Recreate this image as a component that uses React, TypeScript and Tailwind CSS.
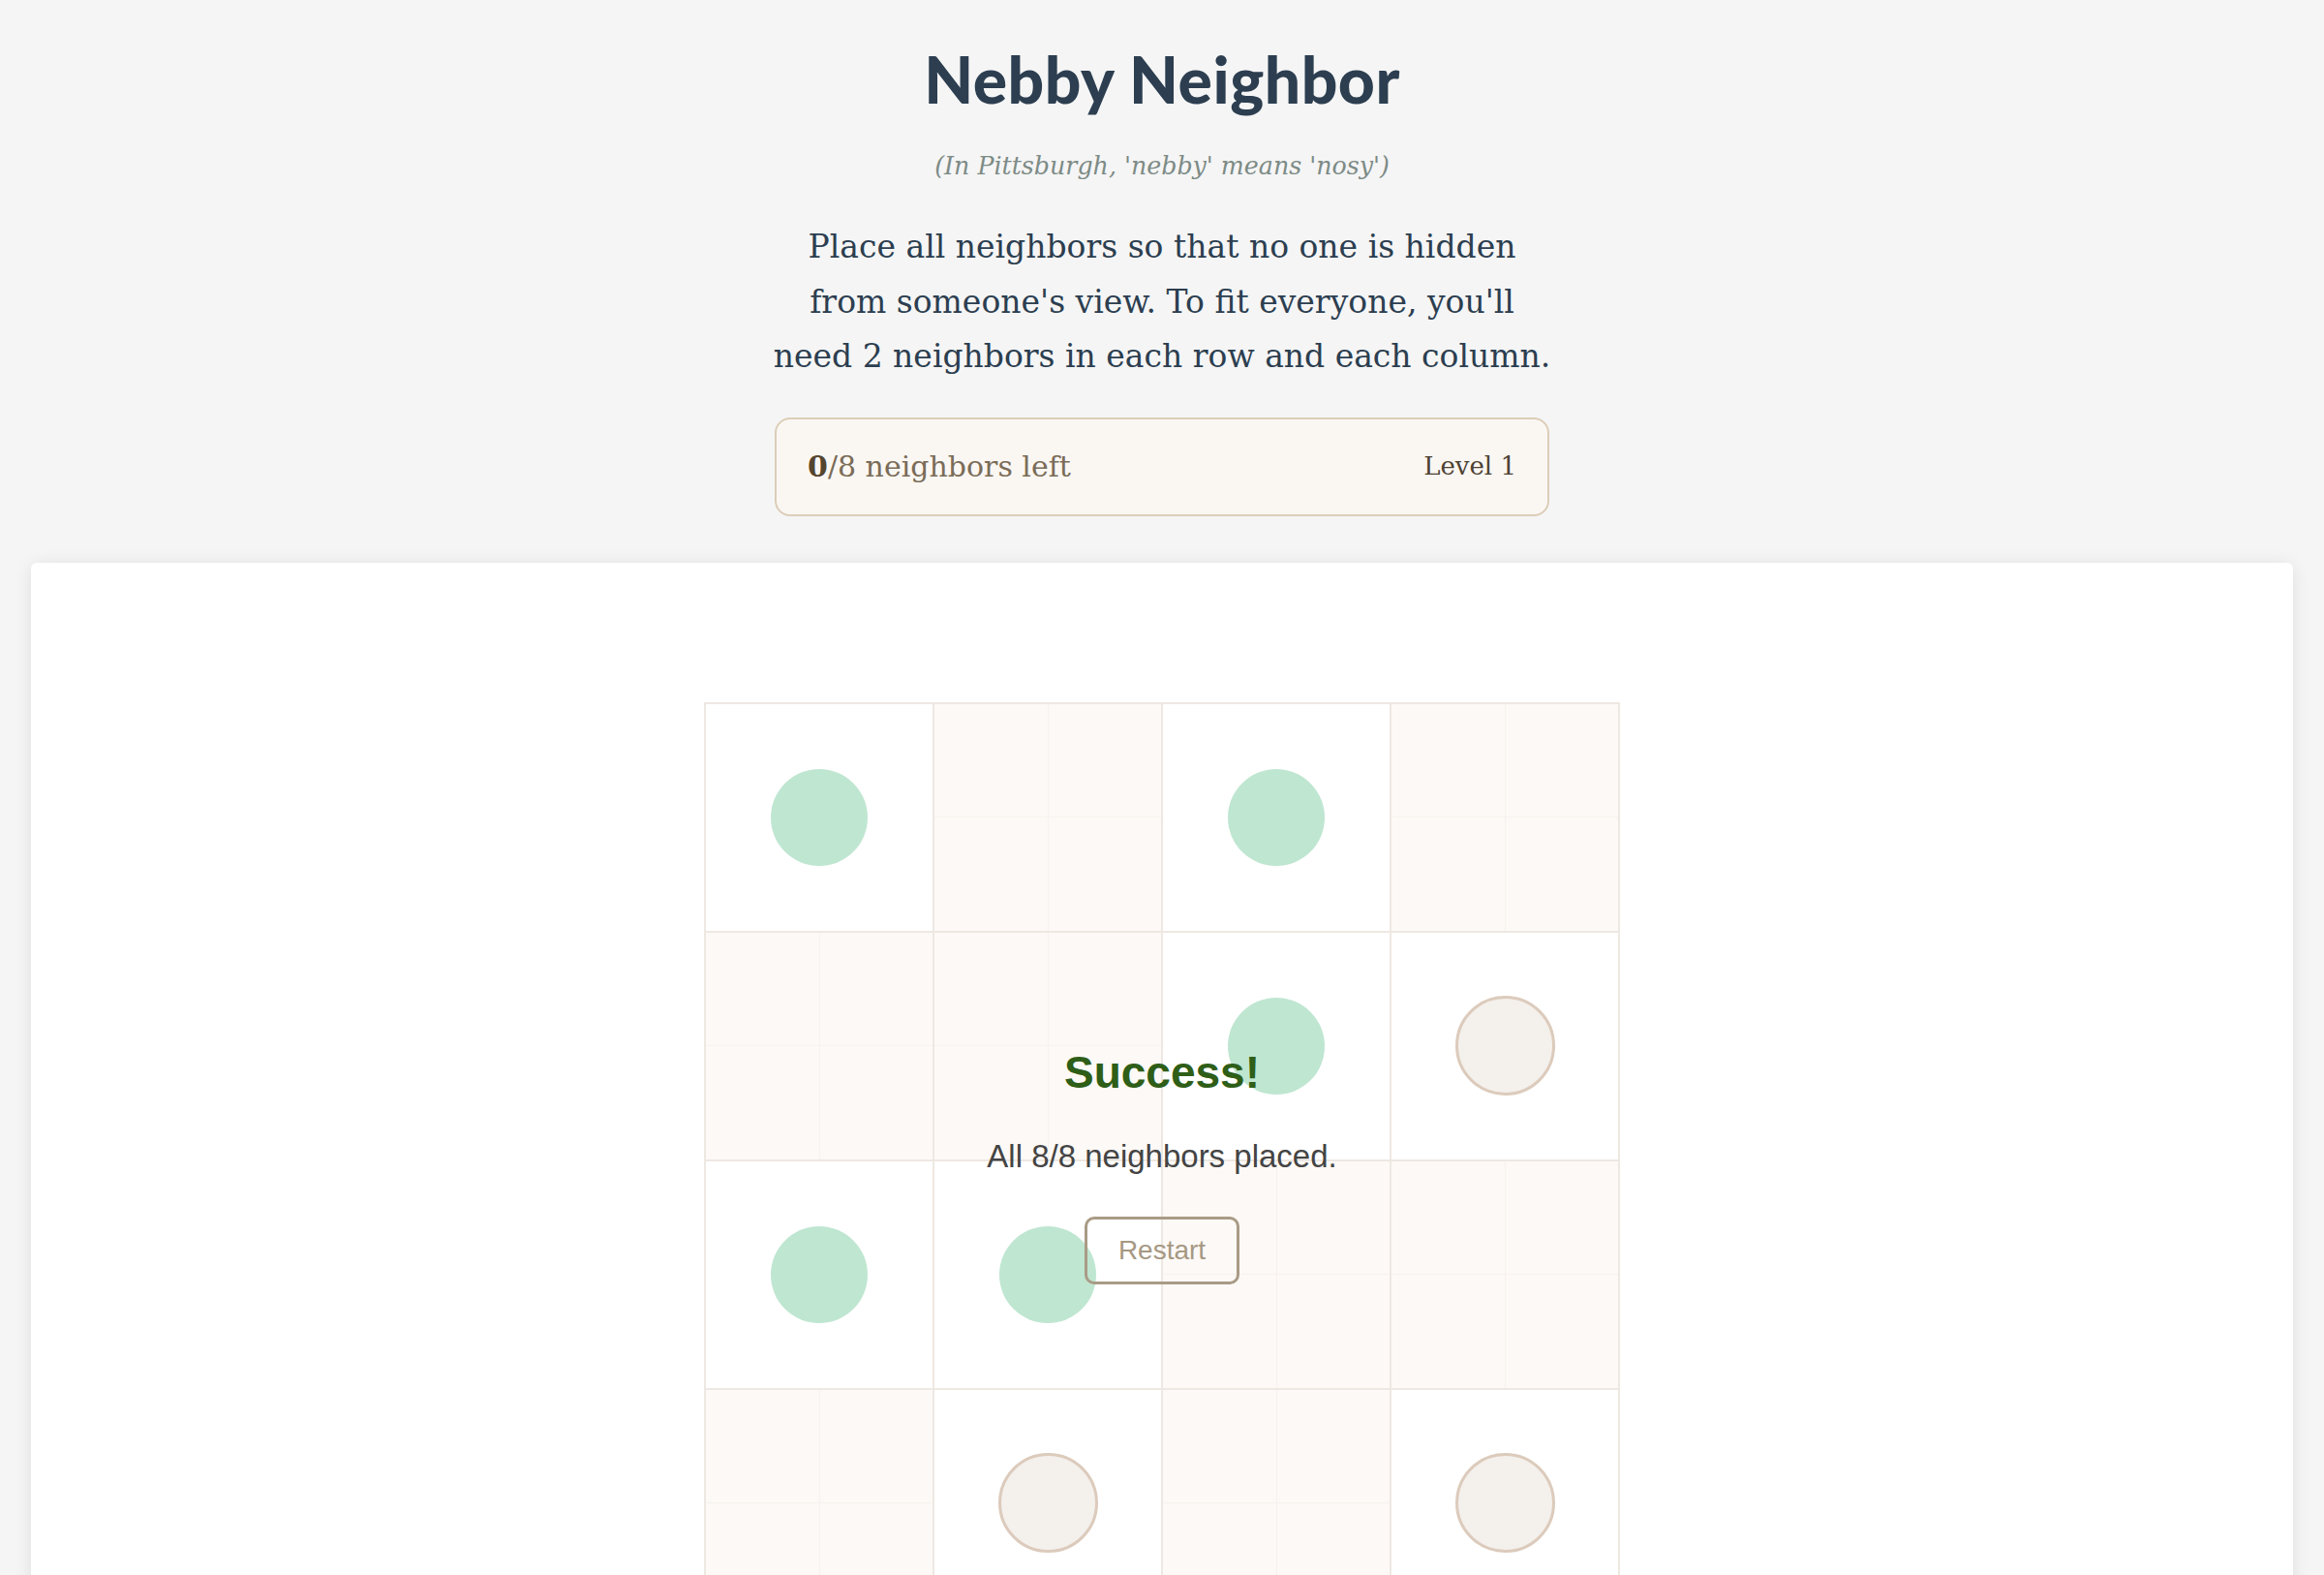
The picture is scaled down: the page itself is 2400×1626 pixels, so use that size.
import React from "react";

type Cell = "g" | "s" | "e";

const board: Cell[][] = [
    ["g", "s", "g", "s"],
    ["s", "s", "g", "e"],
    ["g", "g", "s", "s"],
    ["s", "e", "s", "e"],
];

function BoardCell({ kind }: { kind: Cell }) {
    if (kind === "s") {
        return (
            <div className="grid grid-cols-2 grid-rows-2 gap-px bg-[#f7f2ed] w-[234px] h-[234px]">
                <div className="bg-[#fcf9f6]" />
                <div className="bg-[#fcf9f6]" />
                <div className="bg-[#fcf9f6]" />
                <div className="bg-[#fcf9f6]" />
            </div>
        );
    }
    return (
        <div className="flex items-center justify-center bg-white w-[234px] h-[234px]">
            {kind === "g" ? (
                <div className="w-[100px] h-[100px] rounded-full bg-[#bfe6d1]" />
            ) : (
                <div className="w-[103px] h-[103px] rounded-full border-[3px] border-[#dccbbc] bg-[#f4f0ec]" />
            )}
        </div>
    );
}

export default function App() {
    const serif = "font-['DejaVu_Serif',serif]";
    return (
        <div className="min-h-[1626px] bg-[#f5f5f5] pt-[40px] px-[32px] overflow-hidden">
            <header className="flex flex-col items-center text-center">
                <h1 className="font-['Lato',sans-serif] font-black text-[66px] leading-[84px] text-[#2c3e50] tracking-[0.5px]">
                    Nebby Neighbor
                </h1>
                <p className={`${serif} italic text-[25.3px] leading-[40px] mt-[28px] text-[#7d8b86]`}>
                    (In Pittsburgh, 'nebby' means 'nosy')
                </p>
                <p className={`${serif} text-[33px] leading-[56.5px] mt-[35px] text-[#2c3e50] whitespace-nowrap`}>
                    Place all neighbors so that no one is hidden
                    <br />
                    from someone's view. To fit everyone, you'll
                    <br />
                    need 2 neighbors in each row and each column.
                </p>
                <div className="mt-[34px] w-[800px] h-[102px] flex items-center justify-between px-[32px] border-2 border-[#dccdb8] rounded-[16px] bg-[#faf7f3]">
                    <span className={`${serif} text-[30px] text-[#7a6c58]`}>
                        <b className="text-[#54452f]">0</b>/8 neighbors left
                    </span>
                    <span className={`${serif} text-[26px] text-[#4d4233]`}>Level 1</span>
                </div>
            </header>

            <main className="mt-[48px] bg-white rounded-[6px] shadow-[0_2px_18px_rgba(0,0,0,0.09)] pt-[144px] pb-[80px] flex justify-center">
                <div className="relative">
                    <div className="grid grid-cols-4 gap-[2px] p-[2px] bg-[#eee8e2]">
                        {board.flatMap((row, r) =>
                            row.map((kind, c) => <BoardCell key={`${r}-${c}`} kind={kind} />)
                        )}
                    </div>
                    <div className="absolute inset-0 pt-[9px] flex flex-col items-center justify-center pointer-events-none font-['Liberation_Sans',Arial,sans-serif]">
                        <h2 className="text-[46px] leading-[56px] font-bold text-[#2e5e18]">Success!</h2>
                        <p className="mt-[40px] text-[33px] leading-[37px] text-[#444444]">All 8/8 neighbors placed.</p>
                        <button className="mt-[44px] w-[160px] h-[70px] border-[3px] border-[#a99b86] rounded-[10px] text-[28px] text-[#a69883] bg-transparent">
                            Restart
                        </button>
                    </div>
                </div>
            </main>
        </div>
    );
}
